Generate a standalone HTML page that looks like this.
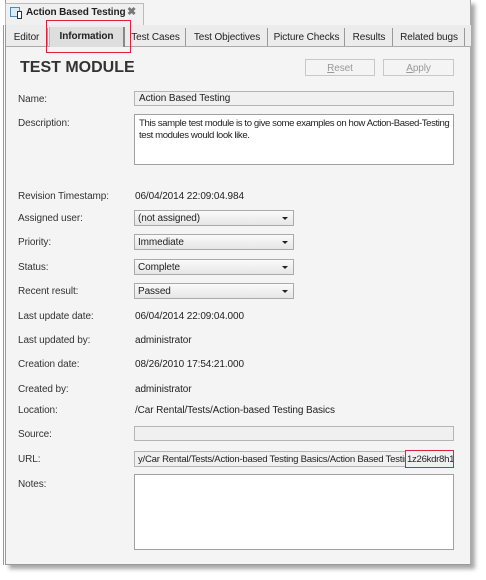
<!DOCTYPE html>
<html><head><style>
*{margin:0;padding:0;box-sizing:border-box}
body{width:486px;height:580px;background:#fff;font-family:"Liberation Sans",sans-serif;font-size:10px;color:#222;position:relative;overflow:hidden;letter-spacing:-0.1px}
.a{position:absolute}
.win{left:5px;top:0;width:466px;height:565px;background:#f4f4f4;border-left:1px solid #999;border-right:1px solid #aaa;border-bottom:1px solid #999;box-shadow:4px 4px 4px rgba(0,0,0,.35)}
.lbl{left:18px;font-size:10px;color:#333}
.val{left:135px;font-size:10px;color:#222}
.fld{left:134px;width:320px;background:#f0f0f0;border:1px solid #b5b5b5;font-size:10px;padding:2px 4px;white-space:nowrap;overflow:hidden}
.ta{background:#fff;border:1px solid #a0a0a0}
.dd{left:134px;width:160px;height:16px;border:1px solid #aaa;background:linear-gradient(#fafafa,#e6e6e6);font-size:10px;padding:2px 3px}
.dd:after{content:"";position:absolute;right:5px;top:6px;border-left:3px solid transparent;border-right:3px solid transparent;border-top:3px solid #222}
.tab{top:28px;height:18px;font-size:10px;padding-top:4px;text-align:center;border-right:1px solid #999;white-space:nowrap}
.btn{top:59px;height:17px;border:1px solid #c8c8c8;background:#f4f4f4;color:#999;font-size:10px;text-align:center;padding-top:3px}
</style></head><body>
<div class="a" style="left:0;top:0;width:486px;height:25px;background:#fff"></div>
<div class="a win"></div>
<div class="a" style="left:3px;top:25px;width:1px;height:540px;background:#999"></div>
<div class="a" style="left:5px;top:3px;width:139px;height:22px;background:#f0f0f0;border:1px solid #bbb;border-bottom:none"></div>
<div class="a" style="left:10px;top:7px;width:10px;height:10px;border:1px solid #4a8ab8;background:#dde9f3"></div>
<div class="a" style="left:17px;top:11px;width:5px;height:8px;border:1px solid #333;background:#fff"></div>
<div class="a" style="left:26px;top:7px;font-weight:bold;font-size:10px;white-space:nowrap">Action Based Testing</div>
<div class="a" style="left:127px;top:5px;font-size:11px;color:#777;font-weight:bold">✖</div>
<div class="a" style="left:6px;top:25px;width:465px;height:22px;background:#ececec;border-bottom:1px solid #aaa"></div>
<div class="a tab" style="left:6px;width:42px">Editor</div>
<div class="a tab" style="left:49px;top:27px;width:76px;height:20px;background:#dedede;font-weight:bold;border-left:1px solid #bbb;border-right:2px solid #888;padding-top:4px">Information</div>
<div class="a tab" style="left:126px;width:60px">Test Cases</div>
<div class="a tab" style="left:187px;width:81px">Test Objectives</div>
<div class="a tab" style="left:269px;width:76px">Picture Checks</div>
<div class="a tab" style="left:346px;width:47px">Results</div>
<div class="a tab" style="left:394px;width:71px">Related bugs</div>
<div class="a" style="left:46px;top:20px;width:85px;height:33px;border:1px solid #e0203a"></div>
<div class="a" style="left:20px;top:59px;font-size:16px;font-weight:bold;color:#333;letter-spacing:0">TEST MODULE</div>
<div class="a btn" style="left:305px;width:70px"><u>R</u>eset</div>
<div class="a btn" style="left:383px;width:71px"><u>A</u>pply</div>

<div class="a lbl" style="top:94px">Name:</div>
<div class="a fld" style="top:91px;height:15px;padding-top:1px">Action Based Testing</div>
<div class="a lbl" style="top:118px">Description:</div>
<div class="a fld ta" style="top:114px;height:51px;white-space:nowrap;line-height:12px;padding:3px 4px;font-size:9.6px;letter-spacing:-0.4px">This sample test module is to give some examples on how Action-Based-Testing<br>test modules would look like.</div>
<div class="a lbl" style="top:191px">Revision Timestamp:</div>
<div class="a val" style="top:191px">06/04/2014 22:09:04.984</div>
<div class="a lbl" style="top:213px">Assigned user:</div>
<div class="a dd" style="top:210px">(not assigned)</div>
<div class="a lbl" style="top:237px">Priority:</div>
<div class="a dd" style="top:234px">Immediate</div>
<div class="a lbl" style="top:262px">Status:</div>
<div class="a dd" style="top:259px">Complete</div>
<div class="a lbl" style="top:286px">Recent result:</div>
<div class="a dd" style="top:283px">Passed</div>
<div class="a lbl" style="top:311px">Last update date:</div>
<div class="a val" style="top:311px">06/04/2014 22:09:04.000</div>
<div class="a lbl" style="top:335px">Last updated by:</div>
<div class="a val" style="top:335px">administrator</div>
<div class="a lbl" style="top:359px">Creation date:</div>
<div class="a val" style="top:359px">08/26/2010 17:54:21.000</div>
<div class="a lbl" style="top:384px">Created by:</div>
<div class="a val" style="top:384px">administrator</div>
<div class="a lbl" style="top:405px">Location:</div>
<div class="a val" style="top:405px">/Car Rental/Tests/Action-based Testing Basics</div>
<div class="a lbl" style="top:429px">Source:</div>
<div class="a fld" style="top:426px;height:15px"></div>
<div class="a lbl" style="top:454px">URL:</div>
<div class="a fld" style="top:451px;height:16px;padding:2px 3px;font-size:9.6px;letter-spacing:-0.25px">y/Car Rental/Tests/Action-based Testing Basics/Action Based Testing-</div>
<div class="a" style="left:405px;top:450px;width:49px;height:18px;border:1px solid #e0203a;background:#f0f0f0;font-size:9.6px;padding:3px 1px;letter-spacing:-0.3px;white-space:nowrap;overflow:hidden">1z26kdr8h1</div>
<div class="a lbl" style="top:479px">Notes:</div>
<div class="a fld ta" style="top:474px;height:76px"></div>
</body></html>
